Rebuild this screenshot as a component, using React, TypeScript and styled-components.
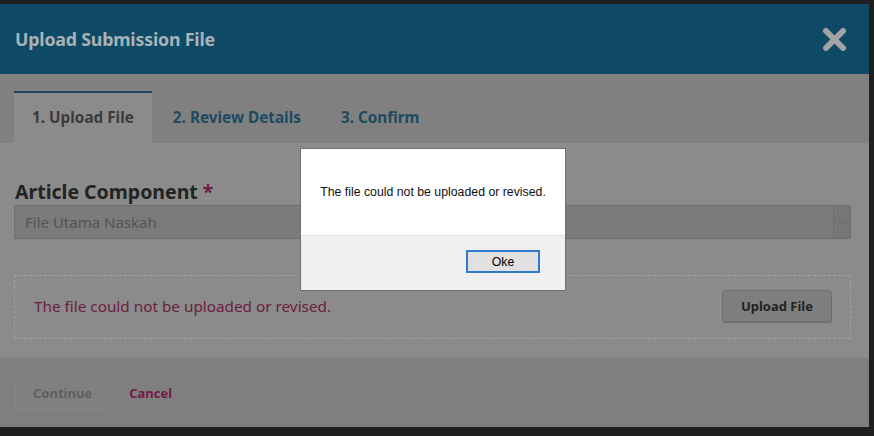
import React from "react";
import styled, { createGlobalStyle } from "styled-components";

const GlobalStyle = createGlobalStyle`
  html, body {
    margin: 0;
    padding: 0;
    background: #141414;
    font-family: "Noto Sans", "Open Sans", sans-serif;
  }
  #root {
    width: 874px;
    height: 436px;
    overflow: hidden;
  }
`;

const Screen = styled.div`
  position: relative;
  width: 874px;
  height: 436px;
  padding-top: 4px;
  box-sizing: border-box;
  background: #1f1f1f;
`;

const Modal = styled.div`
  width: 869px;
  height: 423px;
  display: flex;
  flex-direction: column;
  background: #8a8a8a;
`;

const Header = styled.header`
  height: 70px;
  flex: 0 0 70px;
  display: flex;
  align-items: center;
  justify-content: space-between;
  padding: 0 22px 0 15px;
  box-sizing: border-box;
  background: #0e4a66;
`;

const Title = styled.h1`
  margin: 0;
  font-size: 17.8px;
  font-weight: 700;
  color: #a8b2b7;
  letter-spacing: -0.2px;
`;

const CloseButton = styled.button`
  border: 0;
  background: transparent;
  padding: 0;
  display: flex;
  cursor: pointer;
`;

const Tabs = styled.nav`
  flex: 0 0 69px;
  display: flex;
  align-items: flex-end;
  gap: 2px;
  padding-left: 14px;
  box-sizing: border-box;
  background: #808080;
`;

interface TabProps {
  $active?: boolean;
}

const Tab = styled.div<TabProps>`
  height: 52px;
  box-sizing: border-box;
  display: flex;
  align-items: center;
  padding: 0 ${(p) => (p.$active ? "18px" : "19px")} 3px;
  font-size: 15.3px;
  font-weight: 700;
  color: ${(p) => (p.$active ? "#3b3b3b" : "#1d4a61")};
  background: ${(p) => (p.$active ? "#8b8b8b" : "transparent")};
  border-top: 2px solid ${(p) => (p.$active ? "#1c4660" : "transparent")};
`;

const Content = styled.section`
  flex: 0 0 214px;
  box-sizing: border-box;
  padding: 36px 18px 0 14px;
  background: #8b8b8b;
`;

const Label = styled.label`
  display: block;
  font-size: 19.5px;
  font-weight: 700;
  color: #232323;
  line-height: 26px;
  height: 26px;
  padding-left: 1px;
`;

const Required = styled.span`
  color: #6e1e45;
`;

const Select = styled.div`
  height: 34px;
  display: flex;
  align-items: stretch;
  box-sizing: border-box;
  border: 1px solid #6e6e6e;
  background: #7b7b7b;
`;

const SelectValue = styled.div`
  flex: 1;
  display: flex;
  align-items: center;
  padding-left: 10px;
  font-size: 15px;
  color: #545454;
`;

const SelectArrow = styled.div`
  width: 16px;
  display: flex;
  align-items: center;
  justify-content: center;
  background: #767676;
  border-left: 1px solid #6c6c6c;
`;

const DropZone = styled.div`
  margin-top: 36px;
  height: 64px;
  box-sizing: border-box;
  border: 1px dashed #a2a2a2;
  display: flex;
  align-items: center;
  justify-content: space-between;
  padding: 0 18px 2px 19px;
`;

const ErrorText = styled.p`
  margin: 0;
  font-size: 15.3px;
  color: #6c1d40;
`;

interface ButtonProps {
  $muted?: boolean;
}

const Button = styled.button<ButtonProps>`
  height: ${(p) => (p.$muted ? "32px" : "33px")};
  padding: 0 ${(p) => (p.$muted ? "17px" : "18px")};
  font-family: "Noto Sans", sans-serif;
  font-size: 13px;
  font-weight: 700;
  color: ${(p) => (p.$muted ? "#5f5f5f" : "#232323")};
  background: ${(p) => (p.$muted ? "#808080" : "#7e7e7e")};
  border: 1px solid ${(p) => (p.$muted ? "#858585" : "#6f6f6f")};
  border-radius: 3px;
  box-shadow: ${(p) => (p.$muted ? "none" : "inset 0 -1px 0 #727272")};
`;

const Footer = styled.footer`
  flex: 1;
  display: flex;
  align-items: center;
  gap: 19px;
  padding: 0 15px;
  background: #7f7f7f;
  border-top: 1px solid #868686;
`;

const LinkButton = styled.a`
  font-size: 13px;
  font-weight: 700;
  color: #76194a;
  text-decoration: none;
`;

const Alert = styled.div`
  position: absolute;
  left: 300px;
  top: 148px;
  width: 266px;
  height: 143px;
  box-sizing: border-box;
  border: 1px solid #707070;
  background: #ffffff;
  display: flex;
  flex-direction: column;
  font-family: "Liberation Sans", Arial, sans-serif;
`;

const AlertBody = styled.div`
  flex: 0 0 86px;
  display: flex;
  align-items: center;
  justify-content: center;
  font-size: 12.3px;
  color: #111;
`;

const AlertActions = styled.div`
  flex: 1;
  display: flex;
  align-items: center;
  justify-content: flex-end;
  padding: 0 25px 3px 0;
  background: #f0f0f0;
  border-top: 1px solid #e3e3e3;
`;

const OkButton = styled.button`
  width: 74px;
  height: 23px;
  box-sizing: border-box;
  border: 2px solid #2f7bcf;
  background: #e1e1e1;
  font-family: "Liberation Sans", Arial, sans-serif;
  font-size: 12.3px;
  color: #000;
  padding: 0;
`;

const App = () => {
  return (
    <>
      <GlobalStyle />
      <Screen>
        <Modal>
          <Header>
            <Title>Upload Submission File</Title>
            <CloseButton aria-label="Close">
              <svg width="25" height="25" viewBox="0 0 25 25">
                <path
                  d="M4 4 L21 21 M21 4 L4 21"
                  stroke="#a3a3a3"
                  strokeWidth="6"
                  strokeLinecap="round"
                />
              </svg>
            </CloseButton>
          </Header>
          <Tabs>
            <Tab $active>1. Upload File</Tab>
            <Tab>2. Review Details</Tab>
            <Tab>3. Confirm</Tab>
          </Tabs>
          <Content>
            <Label>
              Article Component <Required>*</Required>
            </Label>
            <Select>
              <SelectValue>File Utama Naskah</SelectValue>
              <SelectArrow>
                <svg width="8" height="6" viewBox="0 0 8 6">
                  <path d="M1 1 L4 4.5 L7 1" stroke="#6a6a6a" strokeWidth="1" fill="none" />
                </svg>
              </SelectArrow>
            </Select>
            <DropZone>
              <ErrorText>The file could not be uploaded or revised.</ErrorText>
              <Button>Upload File</Button>
            </DropZone>
          </Content>
          <Footer>
            <Button $muted>Continue</Button>
            <LinkButton href="#">Cancel</LinkButton>
          </Footer>
        </Modal>
        <Alert role="alertdialog">
          <AlertBody>The file could not be uploaded or revised.</AlertBody>
          <AlertActions>
            <OkButton>Oke</OkButton>
          </AlertActions>
        </Alert>
      </Screen>
    </>
  );
};

export default App;
